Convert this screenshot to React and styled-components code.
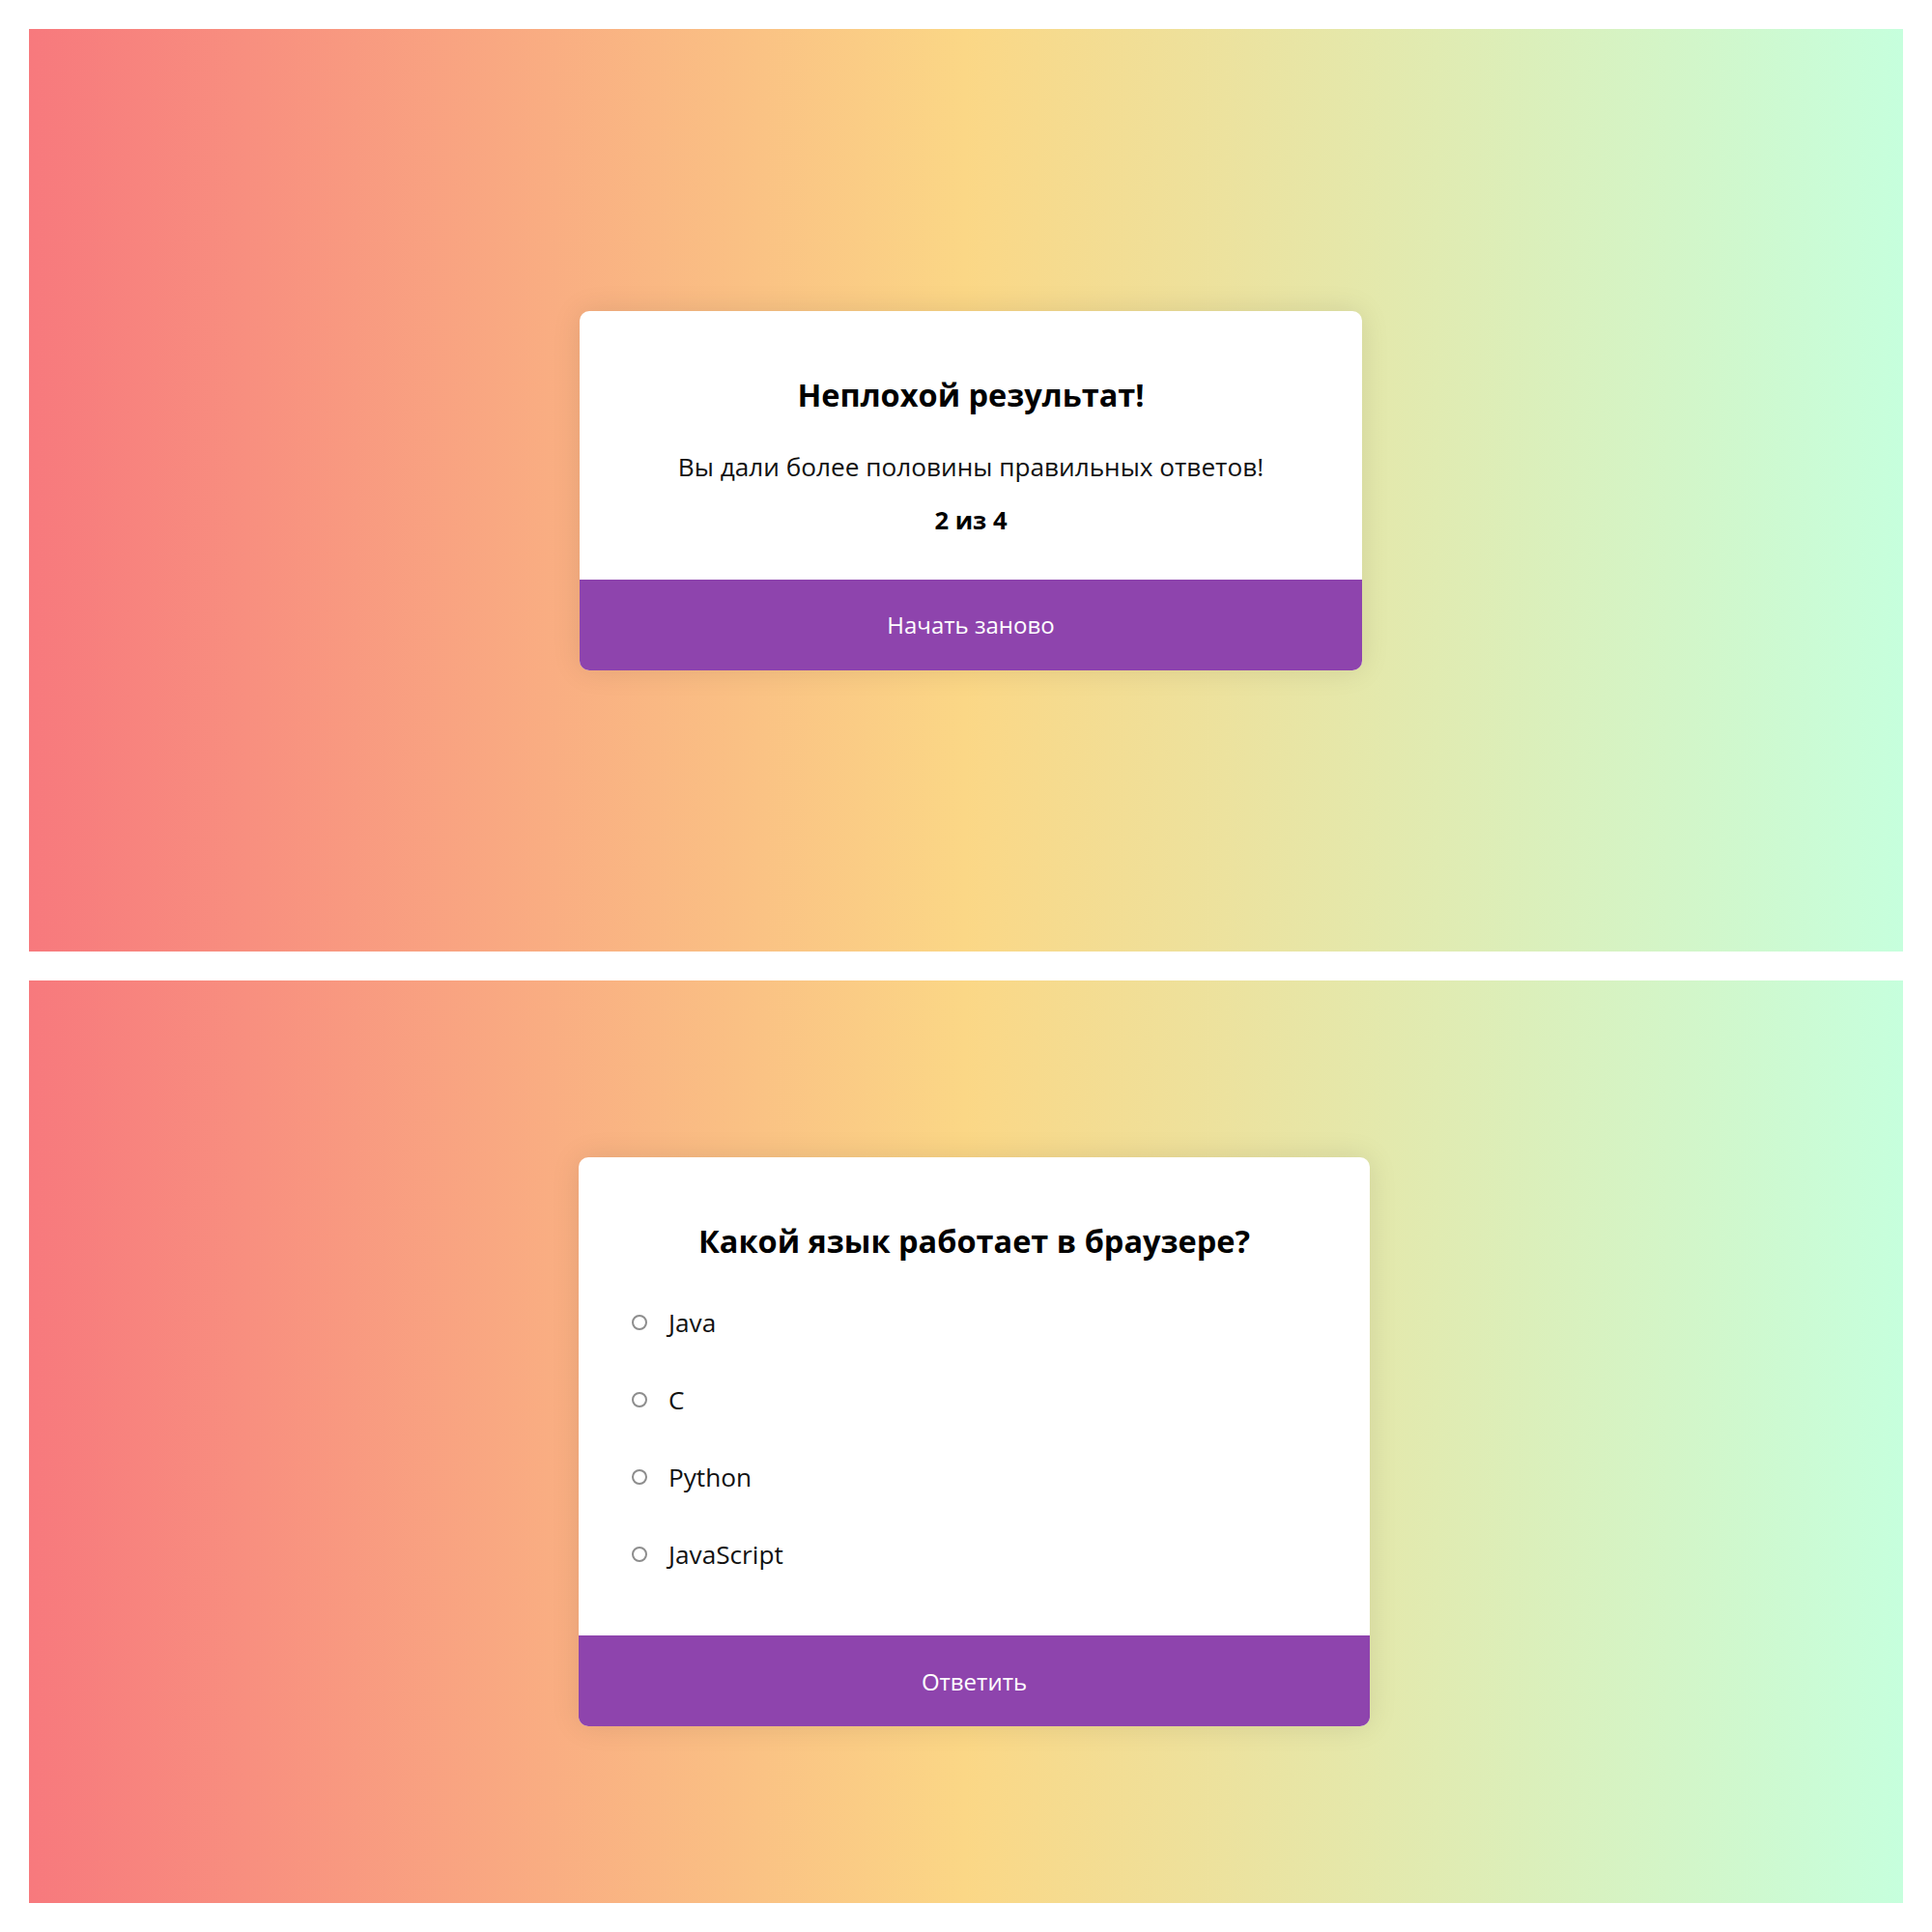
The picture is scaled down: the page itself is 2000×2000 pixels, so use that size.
import React from 'react';
import styled, { createGlobalStyle } from 'styled-components';

const GlobalStyle = createGlobalStyle`
    * { box-sizing: border-box; }
    body {
        margin: 0;
        background: #fff;
        font-family: "Open Sans", "Noto Sans", sans-serif;
    }
`;

const Page = styled.div`
    display: flex;
    flex-direction: column;
    gap: 30px;
    padding: 30px;
`;

const Panel = styled.section`
    height: 955px;
    display: flex;
    align-items: center;
    justify-content: center;
    padding-left: ${p => p.shift || 0}px;
    background: linear-gradient(to right, #f7797d, #fbd786, #c6ffdd);
`;

const Card = styled.div`
    width: ${p => p.width}px;
    background: #fff;
    border-radius: 10px;
    overflow: hidden;
    box-shadow: 0 0 30px rgba(0, 0, 0, 0.1);
`;

const Body = styled.div`
    padding: 66px 0 ${p => p.bottom}px;
    display: flex;
    flex-direction: column;
    align-items: ${p => p.align || 'center'};
`;

const Title = styled.h2`
    margin: 0;
    align-self: center;
    font-size: 32.5px;
    line-height: 42px;
    font-weight: 700;
    color: #000;
`;

const Text = styled.p`
    margin: ${p => p.top}px 0 0;
    font-size: ${p => (p.bold ? 25.6 : 26.2)}px;
    line-height: 38px;
    font-weight: ${p => (p.bold ? 700 : 400)};
    color: ${p => (p.bold ? '#000' : '#111')};
`;

const Options = styled.ul`
    list-style: none;
    margin: 23px 0 0;
    padding: 0 0 0 55px;
    width: 100%;
`;

const Option = styled.li`
    height: 80px;
    display: flex;
    align-items: center;
    gap: 22px;
    font-size: 26.2px;
    color: #111;
`;

const Radio = styled.input`
    appearance: none;
    margin: 0;
    width: 16px;
    height: 16px;
    border: 2px solid #8d8d8d;
    border-radius: 50%;
    background: #fff;
`;

const Button = styled.button`
    display: block;
    width: 100%;
    height: 94px;
    border: none;
    background: #8e44ad;
    color: #fff;
    font-family: inherit;
    font-size: 24px;
    cursor: pointer;
`;

const options = ['Java', 'C', 'Python', 'JavaScript'];

const App = () => {
    return (
        <>
        <GlobalStyle />
        <Page>
            <Panel shift={10}>
                <Card width={810}>
                    <Body bottom={42}>
                        <Title>Неплохой результат!</Title>
                        <Text top={34}>Вы дали более половины правильных ответов!</Text>
                        <Text top={18} bold>2 из 4</Text>
                    </Body>
                    <Button>Начать заново</Button>
                </Card>
            </Panel>
            <Panel shift={17}>
                <Card width={819}>
                    <Body align="stretch" bottom={44}>
                        <Title>Какой язык работает в браузере?</Title>
                        <Options>
                            {options.map(o => (
                                <Option key={o}>
                                    <Radio type="radio" name="answer" />
                                    {o}
                                </Option>
                            ))}
                        </Options>
                    </Body>
                    <Button>Ответить</Button>
                </Card>
            </Panel>
        </Page>
        </>
    );
}

export default App;
